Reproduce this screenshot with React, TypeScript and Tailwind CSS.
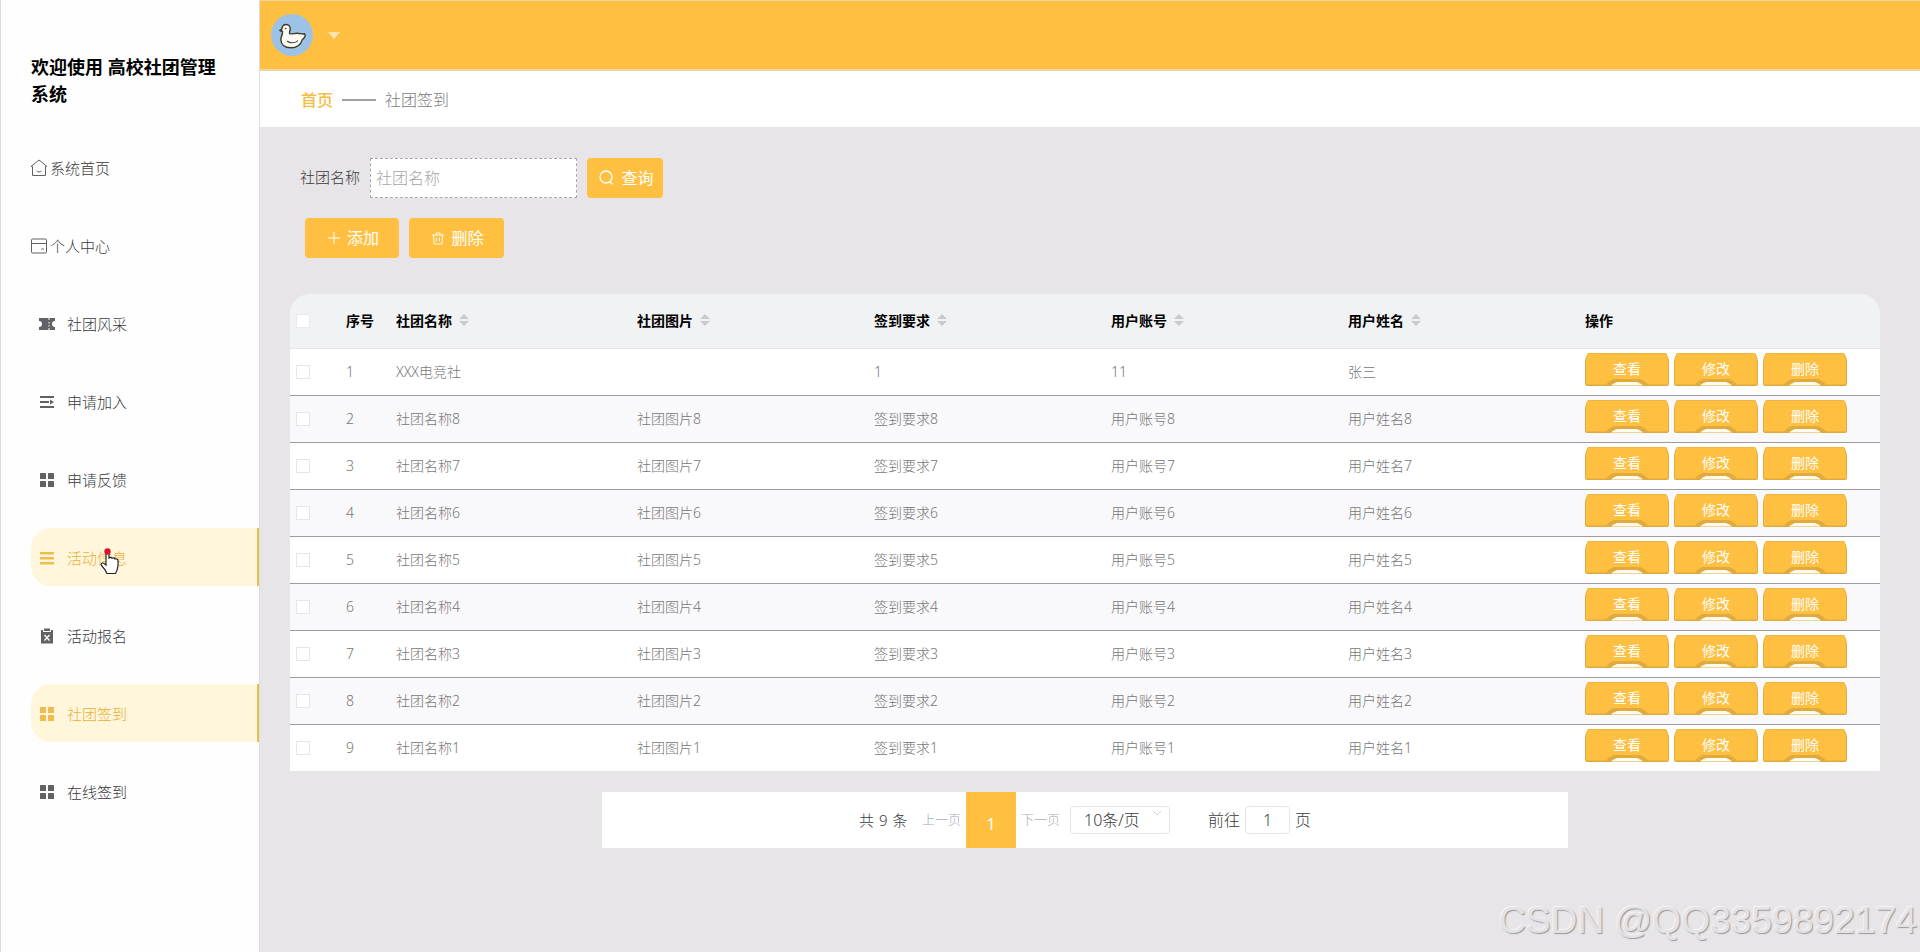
import React, { useState } from 'react';

interface MenuItem {
  label: string;
  icon: string;
  active?: boolean;
}

interface SignRecord {
  id: number;
  club: string;
  image: string;
  requirement: string;
  account: string;
  name: string;
}

const menuItems: MenuItem[] = [
  { label: '社团风采', icon: 'ticket' },
  { label: '申请加入', icon: 'fold' },
  { label: '申请反馈', icon: 'grid' },
  { label: '活动信息', icon: 'list', active: true },
  { label: '活动报名', icon: 'clipboard' },
  { label: '社团签到', icon: 'grid', active: true },
  { label: '在线签到', icon: 'grid' },
];

const records: SignRecord[] = [
  { id: 1, club: 'XXX电竞社', image: '', requirement: '1', account: '11', name: '张三' },
  ...[8, 7, 6, 5, 4, 3, 2, 1].map((n, i) => ({
    id: i + 2,
    club: `社团名称${n}`,
    image: `社团图片${n}`,
    requirement: `签到要求${n}`,
    account: `用户账号${n}`,
    name: `用户姓名${n}`,
  })),
];

const columns = ['社团名称', '社团图片', '签到要求', '用户账号', '用户姓名'];

const gridCols = 'grid grid-cols-[56px_50px_241px_237px_237px_237px_237px_295px] items-center';

const MenuIcon: React.FC<{ type: string }> = ({ type }) => {
  if (type === 'ticket') {
    return (
      <svg className="w-4 h-4 shrink-0" viewBox="0 0 16 16" fill="currentColor">
        <path d="M0 2h9.500v2h1V2H16v3a3 3 0 0 0 0 6v3h-5.500v-2h-1v2H0v-3a3 3 0 0 0 0-6zM9.500 6v1.600h1V6zm0 3v1.600h1V9z" />
      </svg>
    );
  }
  if (type === 'fold') {
    return (
      <svg className="w-4 h-4 shrink-0" viewBox="0 0 16 16" fill="currentColor">
        <path d="M1 2h14v2H1zM1 7h9v2H1zM11 5.500 15 8l-4 2.500zM1 12h14v2H1z" />
      </svg>
    );
  }
  if (type === 'list') {
    return (
      <svg className="w-4 h-4 shrink-0" viewBox="0 0 16 16" fill="currentColor">
        <path d="M1 2h14v2.500H1zM1 7h14v2.500H1zM1 12h14v2.500H1z" />
      </svg>
    );
  }
  if (type === 'clipboard') {
    return (
      <svg className="w-4 h-4 shrink-0" viewBox="0 0 16 16">
        <path d="M2 2h2v2h8V2h2v13.500H2z" fill="currentColor" />
        <path d="M5 .5h6V3H5z" fill="currentColor" />
        <path d="m5.500 7 5 5.500m0-5.500-5 5.500" stroke="white" strokeWidth="1.400" />
      </svg>
    );
  }
  return (
    <svg className="w-4 h-4 shrink-0" viewBox="0 0 16 16" fill="currentColor">
      <rect x="1" y="1" width="6" height="6" rx=".6" />
      <rect x="9" y="1" width="6" height="6" rx=".6" />
      <rect x="1" y="9" width="6" height="6" rx=".6" />
      <rect x="9" y="9" width="6" height="6" rx=".6" />
    </svg>
  );
};

const DuckAvatar: React.FC = () => (
  <svg className="w-[42px] h-[42px]" viewBox="0 0 42 42">
    <circle cx="21" cy="21" r="21" fill="#9cc3e6" />
    <path
      d="M11.500 17.500c-1-.3-2-.5-2.700-1 .7-.9 1.500-1 2.100-1.900.3-2.600 2-4.100 4.300-4.100 2.700 0 4.200 2.100 4 4.600-.1 1.700-1 2.800-.6 4.300 1.500 1.400 4.700-.4 8.100-.2 2.600.2 4.400 1.200 7 .6 1.400 2-.3 4.400-2.400 5.800-1.500 5-5.400 8.200-11.400 8.200-6.500 0-10-3.500-10-8.300 0-3.200 2-4.600 1.600-8z"
      fill="#fdfbf3"
      stroke="#3d392d"
      strokeWidth="1.400"
      strokeLinejoin="round"
    />
    <path d="M16 27c3 2.500 9 2.500 11-.5" fill="none" stroke="#4a4535" strokeWidth="1.100" />
    <path d="M8.500 16.800 11.200 14.500v3z" fill="#3d392d" />
    <circle cx="14.700" cy="14.500" r=".8" fill="#3d392d" />
  </svg>
);

const SortCaret: React.FC = () => (
  <svg className="w-3 h-3.5 ml-[6px] -mt-0.5" viewBox="0 0 12 14" fill="#c8cacc">
    <path d="M6 1l5 5H1zM6 13l5-5H1z" />
  </svg>
);

const RowButton: React.FC<{ label: string }> = ({ label }) => (
  <button className="relative w-[84px] h-[33px] text-sm text-white">
    <svg className="absolute inset-0 w-full h-full" viewBox="0 0 84 33">
      <path d="M3 0h78q3 4 3 11v20q0 2-2 2H2q-2 0-2-2V11Q0 4 3 0z" fill="#dfab3e" />
      <path d="M3 .5h78q2 4 2 10.500v20.500H63q-5-5.500-9-5.500H30q-4 0-9 5.500H1V11Q1 4 3 .5z" fill="#ffc042" />
      <path d="M26 32.500q4-3.500 7-3.500h18q3 0 7 3.500z" fill="#fffaf0" />
    </svg>
    <span className="relative">{label}</span>
  </button>
);

const Sidebar: React.FC = () => (
  <aside className="w-[260px] shrink-0 bg-[#fefefe] border-l border-r border-[#dcdce0]">
    <h1 className="mt-[54px] ml-[30px] w-[200px] text-lg leading-[27px] font-bold text-black">
      欢迎使用 高校社团管理系统
    </h1>
    <nav className="mt-[21px] text-[15px] text-[#606266]">
      <div className="h-[78px] pl-[29px] flex items-center gap-0.5">
        <svg className="w-[18px] h-[18px]" viewBox="0 0 18 18" fill="none" stroke="currentColor">
          <path d="M1 7.500 9 1l8 6.500h-1.500V16.500h-13V7.500zM6.500 12c1.500 1.300 3.500 1.300 5 0" />
        </svg>
        <span className="text-[#38393b]">系统首页</span>
      </div>
      <div className="h-[78px] pl-[29px] flex items-center gap-0.5">
        <svg className="w-[18px] h-[18px]" viewBox="0 0 18 18" fill="none" stroke="currentColor">
          <rect x="1.500" y="2" width="15" height="14" rx="1" />
          <path d="M1.500 6.500h15M11 12.500c1-1 2-1 3 0" />
        </svg>
        <span className="text-[#38393b]">个人中心</span>
      </div>
      {menuItems.map((item) => (
        <div key={item.label} className="h-[78px] pl-[30px] flex items-center">
          <div
            className={
              item.active
                ? 'w-full h-[58px] mb-0.5 pt-0.5 pl-2 flex items-center gap-3 rounded-l-[20px] bg-[#fff6dc] border-r-2 border-[#e6c04c] text-[#efbd4d]'
                : 'w-full h-[58px] pl-2 flex items-center gap-3'
            }
          >
            <MenuIcon type={item.icon} />
            <span className={item.active ? 'text-[#eab03a]' : 'text-[#38393b]'}>{item.label}</span>
          </div>
        </div>
      ))}
    </nav>
  </aside>
);

const App: React.FC = () => {
  const [keyword, setKeyword] = useState('');
  const [page, setPage] = useState('1');

  return (
    <div className="relative flex w-full h-[952px] overflow-hidden bg-[#e7e5e8] font-light font-['Noto_Sans','Noto_Sans_CJK_SC',sans-serif]">
      <Sidebar />

      <main className="flex-1 min-w-0">
        <header className="h-[71px] flex items-center pl-[11px] bg-[#ffc042] border-t border-b-2 border-[#ecd6a6]">
          <DuckAvatar />
          <svg className="w-3 h-[7px] ml-[15px]" viewBox="0 0 12 7" fill="#fbe3b0">
            <path d="M0 0h12L6 7z" />
          </svg>
        </header>

        <div className="h-14 pt-px pl-[41px] flex items-center bg-white text-base">
          <span className="font-medium text-[#f5bd42]">首页</span>
          <span className="w-[34px] h-0.5 mx-[9px] bg-[#a3a3a3]" />
          <span className="text-[#7c7c7c]">社团签到</span>
        </div>

        <div className="pl-[30px] pt-[30px]">
          <div className="flex items-center h-[41px] pl-[10px]">
            <label className="w-[70px] text-[15px] text-[#38393b]">社团名称</label>
            <input
              value={keyword}
              onChange={(e) => setKeyword(e.target.value)}
              placeholder="社团名称"
              className="w-[207px] h-10 px-[5px] bg-white border border-dashed border-[#a8a8a8] text-base placeholder:text-[#a4a6aa] outline-none"
            />
            <button className="ml-[10px] pl-[3px] w-[76px] h-10 flex items-center justify-center gap-[7px] rounded bg-[#ffc042] text-base font-normal text-white">
              <svg className="w-[15px] h-[15px]" viewBox="0 0 15 15" fill="none" stroke="white" strokeWidth="1.300">
                <circle cx="7" cy="7" r="6" />
                <path d="m10.500 12 3.500 2.300" />
              </svg>
              <span>查询</span>
            </button>
          </div>

          <div className="flex gap-[10px] mt-5 pl-[15px]">
            <button className="w-[94px] h-10 pl-[3px] flex items-center justify-center gap-[7px] rounded bg-[#ffc042] text-base font-normal text-white">
              <svg className="w-3 h-3" viewBox="0 0 12 12" stroke="white">
                <path d="M6 0v12M0 6h12" />
              </svg>
              <span>添加</span>
            </button>
            <button className="w-[95px] h-10 pl-[3px] flex items-center justify-center gap-[7px] rounded bg-[#ffc042] text-base font-normal text-white">
              <svg className="w-3 h-[13px]" viewBox="0 0 12 13" fill="none" stroke="white" strokeWidth=".9">
                <path d="M0 3h12M4 3V1h4v2M1.500 3l.5 9h8l.5-9M4.500 5.500v4M7.500 5.500v4" />
              </svg>
              <span>删除</span>
            </button>
          </div>

          <div className="mt-[36px] w-[1590px] overflow-hidden rounded-t-[20px] text-sm">
            <div className={`${gridCols} h-[55px] bg-[#f1f2f3] border-b border-[#e3e4e8] font-bold text-black`}>
              <span className="ml-[6px] w-3.5 h-3.5 bg-white border border-[#e8eaee]" />
              <span>序号</span>
              {columns.map((col) => (
                <div key={col} className="flex items-center">
                  <span>{col}</span>
                  <SortCaret />
                </div>
              ))}
              <span>操作</span>
            </div>
            {records.map((row) => (
              <div
                key={row.id}
                className={`${gridCols} h-[47px] border-b border-[#9c9ca0] last:h-[46px] last:border-0 text-[#777] even:bg-white odd:bg-[#f9f8fa]`}
              >
                <span className="ml-[6px] w-3.5 h-3.5 bg-white border border-[#e4e6ea]" />
                <span>{row.id}</span>
                <span>{row.club}</span>
                <span>{row.image}</span>
                <span>{row.requirement}</span>
                <span>{row.account}</span>
                <span>{row.name}</span>
                <div className="flex gap-[5px] -mt-1.5 font-normal">
                  <RowButton label="查看" />
                  <RowButton label="修改" />
                  <RowButton label="删除" />
                </div>
              </div>
            ))}
          </div>

          <div className="mt-[21px] ml-[312px] w-[966px] h-14 pl-[257px] flex items-center bg-white text-[#38393b]">
            <span className="w-[63px] text-[15px] [word-spacing:1px]">共 9 条</span>
            <span className="w-11 text-[13px] text-[#a8acb4]">上一页</span>
            <span className="w-[50px] h-14 pt-2 flex items-center justify-center bg-[#ffc042] font-normal text-white">1</span>
            <span className="w-[54px] pl-[5px] text-[13px] text-[#a8acb4]">下一页</span>
            <div className="w-[100px] h-7 pl-[13px] flex items-center rounded-sm border border-[#e2e4e8] text-base">
              <span>10条/页</span>
              <svg className="ml-3 -mt-3.5 w-2.5 h-1.5" viewBox="0 0 10 6" fill="none" stroke="#d4d6da">
                <path d="m1 1 4 4 4-4" />
              </svg>
            </div>
            <span className="ml-[38px] text-base">前往</span>
            <input
              value={page}
              onChange={(e) => setPage(e.target.value)}
              className="mx-[5px] w-[45px] h-7 text-center rounded-sm border border-[#e2e4e8] text-base"
            />
            <span className="text-base">页</span>
          </div>
        </div>
      </main>

      {/* Mouse pointer */}
      <svg className="absolute left-[100px] top-[547px] w-5 h-7" viewBox="0 0 20 28">
        <path
          d="M6 14V5q0-2 1.500-2T9 5v6q2-1.500 3 .3 2-1 3 .7 2.500-.8 3 1.500V19q-.5 4-2.500 7.500H7Q5 22 1.500 18.500q-1-2 .8-2.500 1.700-.2 3.700 2z"
          fill="white"
          stroke="#222"
          strokeWidth="1.200"
        />
        <circle cx="7.500" cy="4.500" r="3.200" fill="#e01224" />
      </svg>

      <div className="absolute right-[3px] bottom-[9px] text-[37.2px] leading-[46px] font-normal text-[#e4e2e5] font-['Liberation_Sans',sans-serif] [text-shadow:1px_1px_1px_#98989c,-1px_-1px_1px_#f6f5f7]">
        CSDN @QQ3359892174
      </div>
    </div>
  );
};

export default App;
